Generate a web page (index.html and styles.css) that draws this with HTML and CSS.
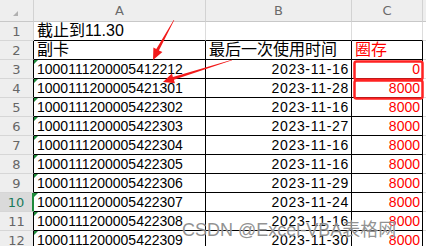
FILE: index.html
```html
<!DOCTYPE html>
<html lang="zh">

<head>
    <meta charset="UTF-8">
    <title>副卡圈存</title>
    <link rel="stylesheet" href="styles.css">
</head>

<body>

    <!-- Hoja de cálculo -->
    <table class="sheet">
        <colgroup>
            <col class="c-idx">
            <col class="c-a">
            <col class="c-b">
            <col class="c-c">
            <col class="c-rest">
        </colgroup>
        <thead>
            <tr>
                <th class="corner"><span class="corner-mark"></span></th>
                <th>A</th>
                <th>B</th>
                <th>C</th>
                <th class="rest"></th>
            </tr>
        </thead>
        <tbody>
            <tr class="first">
                <th>1</th>
                <td class="text">截止到11.30</td>
                <td></td>
                <td></td>
                <td class="rest"></td>
            </tr>
            <tr>
                <th>2</th>
                <td class="text">副卡</td>
                <td class="text">最后一次使用时间</td>
                <td class="text red">圈存</td>
                <td class="rest"></td>
            </tr>
            <tr>
                <th>3</th>
                <td class="id">1000111200005412212</td>
                <td class="date">2023-11-16</td>
                <td class="num">0</td>
                <td class="rest"></td>
            </tr>
            <tr>
                <th>4</th>
                <td class="id">1000111200005421301</td>
                <td class="date">2023-11-28</td>
                <td class="num">8000</td>
                <td class="rest"></td>
            </tr>
            <tr>
                <th>5</th>
                <td class="id">1000111200005422302</td>
                <td class="date">2023-11-16</td>
                <td class="num">8000</td>
                <td class="rest"></td>
            </tr>
            <tr>
                <th>6</th>
                <td class="id">1000111200005422303</td>
                <td class="date">2023-11-27</td>
                <td class="num">8000</td>
                <td class="rest"></td>
            </tr>
            <tr>
                <th>7</th>
                <td class="id">1000111200005422304</td>
                <td class="date">2023-11-16</td>
                <td class="num">8000</td>
                <td class="rest"></td>
            </tr>
            <tr>
                <th>8</th>
                <td class="id">1000111200005422305</td>
                <td class="date">2023-11-16</td>
                <td class="num">8000</td>
                <td class="rest"></td>
            </tr>
            <tr>
                <th>9</th>
                <td class="id">1000111200005422306</td>
                <td class="date">2023-11-29</td>
                <td class="num">8000</td>
                <td class="rest"></td>
            </tr>
            <tr class="active">
                <th>10</th>
                <td class="id">1000111200005422307</td>
                <td class="date">2023-11-24</td>
                <td class="num">8000</td>
                <td class="rest"></td>
            </tr>
            <tr>
                <th>11</th>
                <td class="id">1000111200005422308</td>
                <td class="date">2023-11-16</td>
                <td class="num">8000</td>
                <td class="rest"></td>
            </tr>
            <tr>
                <th>12</th>
                <td class="id">1000111200005422309</td>
                <td class="date">2023-11-30</td>
                <td class="num">8000</td>
                <td class="rest"></td>
            </tr>
        </tbody>
    </table>

    <!-- Marcas rojas: cuadros y flechas -->
    <svg class="marks" width="426" height="246" viewBox="0 0 426 246">
        <rect x="354.5" y="61.5" width="68" height="18" rx="2" fill="none" stroke="#f22" stroke-width="2.5" />
        <rect x="354.5" y="80.5" width="68" height="18" rx="2" fill="none" stroke="#f22" stroke-width="2.5" />
        <polygon fill="#f21a1a"
            points="174.3,20.1 158.9,50.5 162.4,52.0 153,60 153.4,47.6 156.3,49.1 173.7,19.9" />
        <polygon fill="#f21a1a"
            points="232.1,60.3 173.9,79.8 174.9,83.2 163,82 171.9,73.6 172.9,77.0 231.9,59.7" />
    </svg>

    <!-- Marca de agua -->
    <div class="watermark">CSDN @Excel-VBA表格网</div>

</body>

</html>
```

FILE: styles.css
```css
/* Reset */
* {
    margin: 0;
    padding: 0;
    box-sizing: border-box;
}

body {
    width: 426px;
    height: 246px;
    overflow: hidden;
    position: relative;
    background-color: #fff;
    font-family: "Liberation Sans", "Noto Sans CJK SC", sans-serif;
}

/* Tabla estilo hoja de cálculo */
.sheet {
    border-collapse: separate;
    border-spacing: 0;
    table-layout: fixed;
    width: 436px;
}

.c-idx { width: 34px; }
.c-a { width: 172px; }
.c-b { width: 146px; }
.c-c { width: 71px; }
.c-rest { width: 13px; }

.sheet th,
.sheet td {
    padding: 0;
    height: 19px;
    white-space: nowrap;
    overflow: visible;
    border-right: 1px solid #000;
    border-bottom: 1px solid #000;
}

/* Cabecera de columnas */
.sheet thead th {
    height: 22px;
    background-color: #eeeeee;
    color: #6a6a6a;
    font-family: "DejaVu Sans", sans-serif;
    font-weight: normal;
    font-size: 13px;
    border-right: 1px solid #d2d2d2;
    border-bottom: 1px solid #c8c8c8;
}

.corner {
    position: relative;
}

.corner-mark {
    position: absolute;
    left: 13px;
    top: 11px;
    width: 0;
    height: 0;
    border-left: 5px solid transparent;
    border-bottom: 5px solid #b0b0b0;
}

/* Números de fila */
.sheet tbody th {
    background-color: #eeeeee;
    color: #666;
    font-family: "DejaVu Sans", sans-serif;
    font-weight: normal;
    font-size: 13px;
    border-bottom: 1px solid #d6d6d6;
}

.sheet tr.first th {
    border-right-color: #d2d2d2;
}

.sheet tr.first td {
    border-right-color: #dcdcdc;
}

.sheet tr.active th {
    background-color: #dadada;
    color: #1a7a5a;
    border-right: 2px solid #1e8a3a;
}

.sheet .rest {
    border-right: none;
    border-bottom: 1px solid #dcdcdc;
}

.sheet thead .rest {
    border-bottom: 1px solid #c8c8c8;
}

/* Contenido de celdas */
.sheet td {
    color: #000;
    font-size: 16px;
    vertical-align: bottom;
    line-height: 18px;
}

.text {
    padding-left: 3px !important;
}

.red {
    color: #f00 !important;
}

.id {
    position: relative;
    padding-left: 3px !important;
    font-size: 14px !important;
}

/* Triángulo verde de número como texto */
.id::before {
    content: '';
    position: absolute;
    left: 0;
    top: 0;
    border-top: 4px solid #1e8a3a;
    border-right: 4px solid transparent;
}

.date {
    text-align: right;
    padding-right: 2px !important;
    font-size: 14px !important;
    letter-spacing: 0.7px;
}

.num {
    text-align: right;
    padding-right: 2px !important;
    font-size: 14px !important;
    color: #f00 !important;
}

/* Anotaciones */
.marks {
    position: absolute;
    left: 0;
    top: 0;
    pointer-events: none;
}

.watermark {
    position: absolute;
    left: 182px;
    top: 215px;
    font-size: 18px;
    color: rgba(110, 110, 110, 0.75);
    text-shadow: 0 0 1px rgba(255, 255, 255, 0.9);
    white-space: nowrap;
    pointer-events: none;
}
```
